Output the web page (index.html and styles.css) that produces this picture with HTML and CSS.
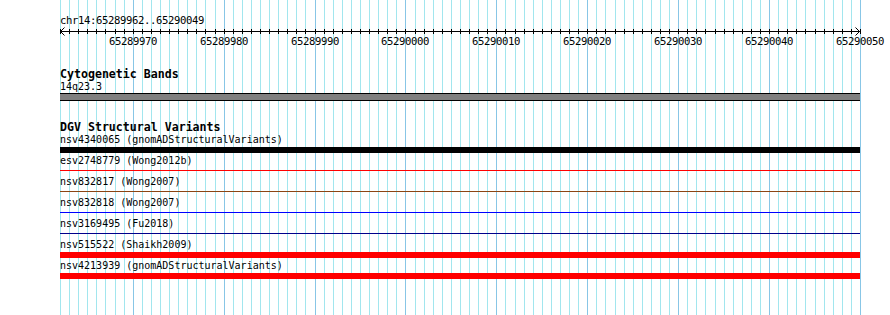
FILE: index.html
```html
<!DOCTYPE html>
<html lang="en">
<head>
    <meta charset="UTF-8">
    <title>chr14:65289962..65290049</title>
    <link rel="stylesheet" href="styles.css">
</head>
<body>
    <div class="view">
        <!-- base grid, drawn by script -->
        <svg class="grid" id="grid" width="890" height="315"></svg>

        <div class="content">
            <div class="ruler">
                <div class="ruler-title">chr14:65289962..65290049</div>
                <svg class="axis" id="axis" width="800" height="10"></svg>
                <div class="axis-labels" id="axisLabels"></div>
            </div>

            <div class="track track-bands">
                <div class="track-title">Cytogenetic Bands</div>
                <div class="band-label">14q23.3</div>
                <div class="band"></div>
            </div>

            <div class="track track-dgv">
                <div class="track-title">DGV Structural Variants</div>

                <div class="feature">
                    <div class="feature-label">nsv4340065 (gnomADStructuralVariants)</div>
                    <div class="glyph"><div class="bar bar-black"></div></div>
                </div>
                <div class="feature">
                    <div class="feature-label">esv2748779 (Wong2012b)</div>
                    <div class="glyph"><div class="line line-red"></div></div>
                </div>
                <div class="feature">
                    <div class="feature-label">nsv832817 (Wong2007)</div>
                    <div class="glyph"><div class="line line-brown"></div></div>
                </div>
                <div class="feature">
                    <div class="feature-label">nsv832818 (Wong2007)</div>
                    <div class="glyph"><div class="line line-blue"></div></div>
                </div>
                <div class="feature">
                    <div class="feature-label">nsv3169495 (Fu2018)</div>
                    <div class="glyph"><div class="line line-navy"></div></div>
                </div>
                <div class="feature">
                    <div class="feature-label">nsv515522 (Shaikh2009)</div>
                    <div class="glyph"><div class="bar bar-red"></div></div>
                </div>
                <div class="feature">
                    <div class="feature-label">nsv4213939 (gnomADStructuralVariants)</div>
                    <div class="glyph"><div class="bar bar-red"></div></div>
                </div>
            </div>
        </div>
    </div>

    <script>
        const start = 65289962;
        const end = 65290050;
        const left = 60;
        const width = 800;
        const scale = width / (end - start);
        const ns = 'http://www.w3.org/2000/svg';

        function xAt(base) {
            return Math.round(left + (base - start) * scale);
        }

        function line(svg, x1, y1, x2, y2, color) {
            const el = document.createElementNS(ns, 'line');
            el.setAttribute('x1', x1);
            el.setAttribute('y1', y1);
            el.setAttribute('x2', x2);
            el.setAttribute('y2', y2);
            el.setAttribute('stroke', color);
            el.setAttribute('stroke-width', 1);
            svg.appendChild(el);
        }

        // grid lines, one per base, darker every ten
        const grid = document.getElementById('grid');
        for (let b = start; b <= end; b++) {
            const x = xAt(b) + 0.5;
            const major = b % 10 === 0;
            line(grid, x, 0, x, 315, major ? '#88c6e6' : '#a2e6ee');
        }

        // ruler axis with ticks and arrow heads
        const axis = document.getElementById('axis');
        line(axis, 0, 5.5, 800, 5.5, '#000');
        for (let b = start; b <= end; b++) {
            const x = xAt(b) - left + 0.5;
            line(axis, x, 3, x, 8, '#000');
        }
        line(axis, 0.5, 5.5, 4.5, 1.5, '#000');
        line(axis, 0.5, 5.5, 4.5, 9.5, '#000');
        line(axis, 799.5, 5.5, 795.5, 1.5, '#000');
        line(axis, 799.5, 5.5, 795.5, 9.5, '#000');

        const labels = document.getElementById('axisLabels');
        for (let b = start; b <= end; b++) {
            if (b % 10 !== 0) continue;
            const span = document.createElement('span');
            span.className = 'axis-label';
            span.textContent = b;
            span.style.left = (xAt(b) - left) + 'px';
            labels.appendChild(span);
        }
    </script>
</body>
</html>
```

FILE: styles.css
```css
* {
    box-sizing: border-box;
    margin: 0;
    padding: 0;
}

body {
    background-color: #ffffff;
    color: #000000;
    font-family: 'DejaVu Sans Mono', 'Liberation Mono', monospace;
    font-size: 10px;
}

.view {
    position: relative;
    width: 890px;
    height: 315px;
    overflow: hidden;
    background: #ffffff;
}

.grid {
    position: absolute;
    top: 0;
    left: 0;
    z-index: 0;
}

.content {
    position: relative;
    z-index: 1;
    width: 860px;
    padding-left: 60px;
}

.ruler {
    padding-top: 15px;
}

.ruler-title {
    font-size: 10.6px;
    letter-spacing: -0.38px;
    line-height: 11px;
    height: 11px;
    white-space: nowrap;
}

.axis {
    display: block;
    overflow: visible;
}

.axis-labels {
    position: relative;
    height: 11px;
}

.axis-label {
    position: absolute;
    top: 0;
    font-size: 10.6px;
    letter-spacing: -0.38px;
    line-height: 11px;
    transform: translateX(-50%);
    white-space: nowrap;
}

.track-title {
    font-weight: bold;
    font-size: 11.6px;
    line-height: 13px;
    height: 13px;
    white-space: nowrap;
}

.track-bands {
    margin-top: 21px;
}

.band-label {
    line-height: 11px;
    height: 11px;
}

.band {
    margin-top: 1px;
    height: 8px;
    background: #808080;
    border-top: 1px solid #000;
    border-bottom: 1px solid #000;
}

.track-dgv {
    margin-top: 20px;
}

.feature {
    height: 21px;
}

.feature-label {
    line-height: 11px;
    height: 11px;
    white-space: nowrap;
}

.glyph {
    height: 10px;
    padding-top: 2px;
}

.bar {
    height: 6px;
}

.line {
    height: 1px;
    margin-top: 2px;
}

.bar-black { background: #000000; }
.bar-red { background: #ff0000; }
.line-red { background: #ff0000; }
.line-brown { background: #8b4513; }
.line-blue { background: #0000ff; }
.line-navy { background: #00008b; }
```
